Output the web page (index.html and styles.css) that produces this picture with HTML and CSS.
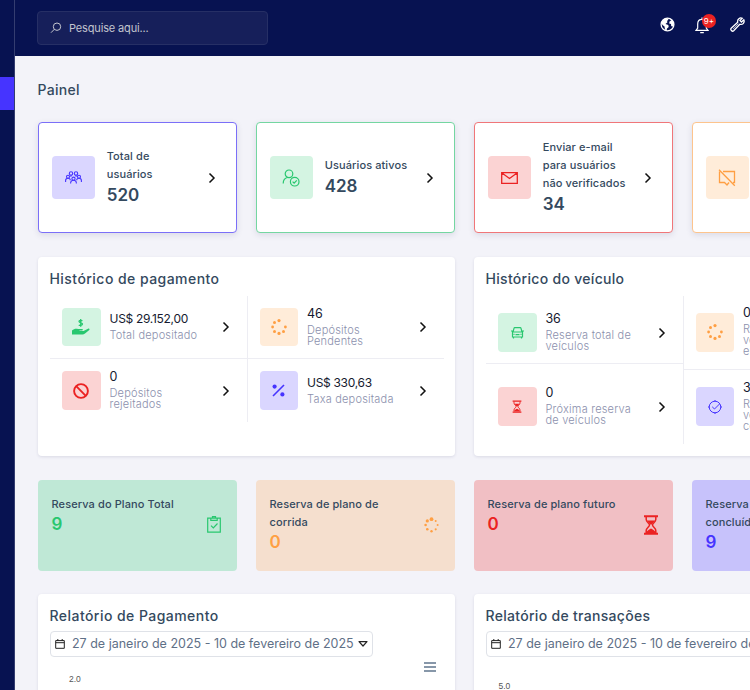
FILE: index.html
```
<!DOCTYPE html>
<html lang="pt">

<head>
    <meta charset="UTF-8">
    <meta name="viewport" content="width=device-width, initial-scale=1.0">
    <title>Painel</title>
    <link rel="stylesheet" href="styles.css">
</head>

<body>
    <!-- Shared icons -->
    <svg class="sprite">
        <symbol id="chevron" viewBox="0 0 8 12">
            <path d="M1.5 1.5L6 6L1.5 10.5" fill="none" stroke="currentColor" stroke-width="1.5" />
        </symbol>
        <symbol id="spinner" viewBox="0 0 16 16">
            <g fill="currentColor">
                <circle cx="8" cy="1.6" r="1.6" />
                <circle cx="3.5" cy="3.5" r="1.5" />
                <circle cx="1.6" cy="8" r="1.4" />
                <circle cx="3.5" cy="12.5" r="1.5" />
                <circle cx="8" cy="14.4" r="1.6" />
                <circle cx="12.5" cy="12.5" r="1.5" />
                <circle cx="14.4" cy="8" r="1.4" />
            </g>
        </symbol>
        <symbol id="hourglass" viewBox="0 0 16 20">
            <path d="M1 1.2h14M1 18.8h14" stroke="currentColor" stroke-width="2" />
            <path d="M3.2 2v2.5c0 2.5 3.3 3.8 3.3 5.5s-3.3 3-3.3 5.5V18M12.8 2v2.5c0 2.5-3.3 3.8-3.3 5.5s3.3 3 3.3 5.5V18" fill="none" stroke="currentColor" stroke-width="1.5" />
            <path d="M4 5.5h8L8.8 9.5H7.2zM3.5 18c0-2.5 2-3 4.5-4.5 2.5 1.5 4.5 2 4.5 4.5z" fill="currentColor" />
        </symbol>
        <symbol id="calendar" viewBox="0 0 10 10">
            <path d="M.7 1.6h8.6v7.7H.7zM.7 3.7h8.6M2.8 0v2M7.2 0v2" fill="none" stroke="currentColor" />
        </symbol>
        <symbol id="caret" viewBox="0 0 10 6">
            <path d="M1 .7h8L5 5z" fill="none" stroke="currentColor" stroke-width="1.2" stroke-linejoin="round" />
        </symbol>
    </svg>

    <aside class="sidebar">
        <div class="sidebar-active"></div>
    </aside>

    <main class="main">
        <header class="topbar">
            <div class="search">
                <svg width="12" height="12" viewBox="0 0 12 12" fill="none" stroke="currentColor">
                    <circle cx="7" cy="4.7" r="3.7" />
                    <path d="M4.3 7.3L1 10.7" />
                </svg>
                <span>Pesquise aqui...</span>
            </div>
            <nav class="top-icons">
                <svg width="15" height="15" viewBox="0 0 15 15">
                    <circle cx="7.5" cy="7.5" r="6.4" fill="none" stroke="#fff" stroke-width="1.3" />
                    <path d="M1.2 5.5L4 2l3-1 1.5 1.5L7 4l.5 1.3L5.5 7l2.8 1 .4 2-1.7 1.6L6.5 14 5 12.5 4.5 9.5 2.5 8zM10 2l3 2.3.8 3.2-1.3 2.3-1.3-.8-.2-2-1.800-.5.3-2 1.500-.7z" fill="#fff" />
                </svg>
                <div class="bell">
                    <svg width="14" height="17" viewBox="0 0 14 17" fill="none" stroke="#fff" stroke-width="1.2">
                        <path d="M1 13.3h12L11.3 11V7c0-2.8-1.7-4.6-4.3-4.6S2.7 4.2 2.7 7v4zM7 .5v2M5.2 15.6h3.6" />
                    </svg>
                    <span class="badge">9+</span>
                </div>
                <svg width="15" height="15" viewBox="0 0 15 15" fill="none" stroke="#fff" stroke-width="1.3">
                    <path d="M12.3 1.3C10 .2 7 2 7.7 5.3L1.2 11.3c-1.300 1.500 1 3.700 2.500 2.500L9.800 7.300c3 .7 5.200-1.800 4-4.500L11.500 5 10 3.600z" />
                    <path d="M3 12.1L8.3 6.7" stroke-width=".7" />
                </svg>
            </nav>
        </header>

        <div class="content">
            <h1 class="page-title">Painel</h1>

            <section class="grid-four">
                <div class="stat purple">
                    <div class="stat-icon">
                        <svg width="17" height="13" viewBox="0 0 17 13" fill="none" stroke="currentColor" stroke-width="1.1">
                            <circle cx="6" cy="2.5" r="1.7" />
                            <circle cx="11" cy="2.5" r="1.7" />
                            <circle cx="3" cy="5.7" r="1.5" />
                            <circle cx="14" cy="5.7" r="1.5" />
                            <circle cx="8.5" cy="7.7" r="1.6" />
                            <path d="M.6 11V9.5C.6 8 1.500 7.300 3 7.300s2.300.7 2.300 2M16.400 11V9.500c0-1.500-.9-2.200-2.400-2.200s-2.300.7-2.300 2M5.600 12.500c0-2 1-3.200 2.900-3.200s2.900 1.200 2.900 3.200M4.500 5.300L7 4.700M12.500 5.300L10 4.700" />
                        </svg>
                    </div>
                    <div class="stat-text">
                        <p>Total de<br>usuários</p>
                        <h3>520</h3>
                    </div>
                    <svg class="chevron"><use href="#chevron" /></svg>
                </div>
                <div class="stat green">
                    <div class="stat-icon">
                        <svg width="18" height="18" viewBox="0 0 18 18" fill="none" stroke="currentColor" stroke-width="1.2">
                            <circle cx="7" cy="4.8" r="3.8" />
                            <path d="M1.2 14.5c0-3.7 1.5-5.5 4.5-6" />
                            <circle cx="12.7" cy="12.7" r="4.3" />
                            <path d="M10.6 12.7l1.5 1.5 2.7-2.9" />
                        </svg>
                    </div>
                    <div class="stat-text">
                        <p>Usuários ativos</p>
                        <h3>428</h3>
                    </div>
                    <svg class="chevron"><use href="#chevron" /></svg>
                </div>
                <div class="stat red">
                    <div class="stat-icon">
                        <svg width="17" height="12" viewBox="0 0 17 12" fill="none" stroke="currentColor" stroke-width="1.3">
                            <path d="M.7.7h15.6v10.6H.7zM1 1l7.5 5.5L16 1" />
                        </svg>
                    </div>
                    <div class="stat-text">
                        <p>Enviar e-mail<br>para usuários<br>não verificados</p>
                        <h3>34</h3>
                    </div>
                    <svg class="chevron"><use href="#chevron" /></svg>
                </div>
                <div class="stat orange">
                    <div class="stat-icon">
                        <svg width="18" height="18" viewBox="0 0 18 18" fill="none" stroke="currentColor" stroke-width="1.3">
                            <path d="M1.5 2.5v11h5l2.5 2.5 2-2.5M5 2.5h11.5v11H15M1 .8l15.8 16" />
                        </svg>
                    </div>
                </div>
            </section>

            <section class="grid-two">
                <div class="panel history">
                    <h2>Histórico de pagamento</h2>
                    <div class="cells">
                        <div class="cell green">
                            <div class="cell-icon">
                                <svg width="18" height="17" viewBox="0 0 18 17">
                                    <path d="M0 11.5c2-1.8 4-2 6-1.5h4c1.2 0 1.2 1.5 0 1.5H7.5v.6h4L16 9.7c1.2-.5 2.2.5 1 1.5l-4 3.3c-.8.7-1.5 1-2.5 1H0z" fill="currentColor" />
                                    <path d="M10.4 1.9C9.6 1.2 7 1 7 2.6s3.5.9 3.5 2.5S7.7 6.7 6.8 5.9M8.7 0v7.8" fill="none" stroke="currentColor" stroke-width="1.3" />
                                </svg>
                            </div>
                            <div class="cell-text">
                                <p class="value amount">US$ 29.152,00</p>
                                <p class="label">Total depositado</p>
                            </div>
                            <svg class="chevron"><use href="#chevron" /></svg>
                        </div>
                        <div class="cell orange">
                            <div class="cell-icon"><svg width="16" height="16"><use href="#spinner" /></svg></div>
                            <div class="cell-text">
                                <p class="value">46</p>
                                <p class="label">Depósitos<br>Pendentes</p>
                            </div>
                            <svg class="chevron"><use href="#chevron" /></svg>
                        </div>
                        <div class="cell red">
                            <div class="cell-icon">
                                <svg width="16" height="16" viewBox="0 0 16 16" fill="none" stroke="currentColor" stroke-width="1.9">
                                    <circle cx="8" cy="8" r="6.9" />
                                    <path d="M3.2 3.2l9.6 9.6" />
                                </svg>
                            </div>
                            <div class="cell-text">
                                <p class="value">0</p>
                                <p class="label">Depósitos<br>rejeitados</p>
                            </div>
                            <svg class="chevron"><use href="#chevron" /></svg>
                        </div>
                        <div class="cell purple">
                            <div class="cell-icon">
                                <svg width="13" height="13" viewBox="0 0 13 13">
                                    <path d="M1 12L12 1" stroke="currentColor" stroke-width="1.6" />
                                    <circle cx="2.6" cy="2.6" r="2.1" fill="currentColor" />
                                    <circle cx="10.4" cy="10.4" r="2.1" fill="currentColor" />
                                </svg>
                            </div>
                            <div class="cell-text">
                                <p class="value amount">US$ 330,63</p>
                                <p class="label">Taxa depositada</p>
                            </div>
                            <svg class="chevron"><use href="#chevron" /></svg>
                        </div>
                    </div>
                </div>

                <div class="panel history">
                    <h2 class="tight">Histórico do veículo</h2>
                    <div class="cells vehicle">
                        <div class="cell green">
                            <div class="cell-icon">
                                <svg width="13" height="12" viewBox="0 0 13 12" fill="none" stroke="currentColor" stroke-width="1.2">
                                    <path d="M2 5l1-3.7c.1-.4.3-.6.7-.6h5.6c.4 0 .6.2.7.6L11 5M0 4h2M11 4h2M1.5 5h10v5h-10zM2.5 10v1.5M10.5 10v1.5M4.5 7.7h4M2.5 7.3h1M9.5 7.3h1" />
                                </svg>
                            </div>
                            <div class="cell-text">
                                <p class="value">36</p>
                                <p class="label">Reserva total de<br>veículos</p>
                            </div>
                            <svg class="chevron"><use href="#chevron" /></svg>
                        </div>
                        <div class="cell orange">
                            <div class="cell-icon"><svg width="16" height="16"><use href="#spinner" /></svg></div>
                            <div class="cell-text">
                                <p class="value">0</p>
                                <p class="label">Reserva de<br>veículos<br>em corrida</p>
                            </div>
                        </div>
                        <div class="cell red">
                            <div class="cell-icon"><svg width="10" height="13"><use href="#hourglass" /></svg></div>
                            <div class="cell-text">
                                <p class="value">0</p>
                                <p class="label">Próxima reserva<br>de veículos</p>
                            </div>
                            <svg class="chevron"><use href="#chevron" /></svg>
                        </div>
                        <div class="cell purple">
                            <div class="cell-icon">
                                <svg width="14" height="14" viewBox="0 0 14 14" fill="none" stroke="currentColor">
                                    <circle cx="7" cy="7" r="5.8" />
                                    <path d="M4.2 6.8L6.5 9l5-5M7 0v1.5M7 12.5V14M0 7h1.5M12.5 7H14" />
                                </svg>
                            </div>
                            <div class="cell-text">
                                <p class="value">36</p>
                                <p class="label">Reserva de<br>veículos<br>concluída</p>
                            </div>
                        </div>
                    </div>
                </div>
            </section>

            <section class="grid-four plans">
                <div class="plan green">
                    <div>
                        <p>Reserva do Plano Total</p>
                        <h3>9</h3>
                    </div>
                    <div class="plan-icon">
                        <svg width="14" height="17" viewBox="0 0 14 17" fill="none" stroke="currentColor" stroke-width="1.2">
                            <path d="M.7 2.2h12.6v14H.7zM3.8 2v2.3h6.4V2H8.5V.7h-3V2zM4 9.600l2.300 2.300L10.500 7.500" />
                        </svg>
                    </div>
                </div>
                <div class="plan orange">
                    <div>
                        <p>Reserva de plano de<br>corrida</p>
                        <h3>0</h3>
                    </div>
                    <div class="plan-icon">
                        <svg width="15" height="16" viewBox="0 0 15 16" fill="currentColor">
                            <circle cx="7.5" cy="2.2" r="1.9" />
                            <circle cx="3.3" cy="3.9" r="1.6" />
                            <circle cx="1.6" cy="8" r="1.3" />
                            <circle cx="3.3" cy="12.3" r="1.3" />
                            <circle cx="7.5" cy="14.2" r="1.2" />
                            <circle cx="11.7" cy="12.3" r="1.1" />
                            <circle cx="13.6" cy="8" r="1" />
                            <circle cx="11.7" cy="3.9" r="1" />
                        </svg>
                    </div>
                </div>
                <div class="plan red">
                    <div>
                        <p>Reserva de plano futuro</p>
                        <h3>0</h3>
                    </div>
                    <div class="plan-icon">
                        <svg width="16" height="20"><use href="#hourglass" /></svg>
                    </div>
                </div>
                <div class="plan purple">
                    <div>
                        <p>Reserva do plano<br>concluída</p>
                        <h3>9</h3>
                    </div>
                </div>
            </section>

            <section class="grid-two reports">
                <div class="panel">
                    <h2>Relatório de Pagamento</h2>
                    <div class="date-range">
                        <svg width="10" height="10"><use href="#calendar" /></svg>
                        <span>27 de janeiro de 2025 - 10 de fevereiro de 2025</span>
                        <svg width="10" height="6"><use href="#caret" /></svg>
                    </div>
                    <div class="chart">
                        <span class="tick">2.0</span>
                        <div class="menu"><i></i><i></i><i></i></div>
                    </div>
                </div>
                <div class="panel">
                    <h2 class="tight">Relatório de transações</h2>
                    <div class="date-range">
                        <svg width="10" height="10"><use href="#calendar" /></svg>
                        <span>27 de janeiro de 2025 - 10 de fevereiro de 2025</span>
                        <svg width="10" height="6"><use href="#caret" /></svg>
                    </div>
                    <div class="chart second">
                        <span class="tick">5.0</span>
                    </div>
                </div>
            </section>
        </div>
    </main>
</body>

</html>
```
FILE: styles.css
```
* {
    box-sizing: border-box;
}

body {
    margin: 0;
    height: 690px;
    display: flex;
    overflow: hidden;
    font-family: Inter, "Open Sans", sans-serif;
    background-color: #f3f3f9;
    color: #34495e;
}

h1,
h2,
h3,
p {
    margin: 0;
}

svg {
    display: block;
    flex-shrink: 0;
}

.sprite {
    display: none;
}

.purple {
    --main: #4634ff;
    --border: #7b6ff8;
    --soft: #dad6ff;
    --fill: #c7c2fb;
}

.green {
    --main: #28c76f;
    --border: #74d6a1;
    --soft: #d4f4e2;
    --fill: #bfe8d6;
}

.red {
    --main: #eb2222;
    --border: #f07679;
    --soft: #fbd3d3;
    --fill: #f1bfc4;
}

.orange {
    --main: #ff9f43;
    --border: #fdc48d;
    --soft: #ffecd9;
    --fill: #f5dfce;
}

.sidebar {
    width: 15px;
    flex-shrink: 0;
    padding-top: 77px;
    background-color: #071251;
    border-right: 1px solid #343d70;
}

.sidebar-active {
    height: 33px;
    background-color: #4634ff;
}

.main {
    flex: 1;
    min-width: 0;
    overflow: hidden;
}

.topbar {
    height: 56px;
    padding: 11px 0 0 22px;
    display: flex;
    align-items: flex-start;
    background-color: #071251;
}

.search {
    width: 231px;
    height: 34px;
    padding-left: 12px;
    flex-shrink: 0;
    display: flex;
    align-items: center;
    gap: 7px;
    border: 1px solid #262f65;
    border-radius: 4px;
    background-color: #161f5a;
    color: #c3c5cf;
    font-size: 11px;
    letter-spacing: -0.15px;
}

.top-icons {
    margin: 6px 0 0 391.5px;
    display: flex;
    gap: 20.5px;
}

.bell {
    position: relative;
}

.badge {
    position: absolute;
    top: -3px;
    left: 7px;
    width: 14px;
    height: 14px;
    border-radius: 50%;
    background-color: #eb2222;
    color: #fff;
    font-size: 8px;
    line-height: 14px;
    text-align: center;
}

.content {
    width: 877px;
    padding: 23px 0 0 22.5px;
}

.page-title {
    font-size: 14px;
    line-height: 21px;
    font-weight: 500;
    letter-spacing: 0.3px;
}

.grid-four {
    display: grid;
    grid-template-columns: repeat(4, 199.5px);
    gap: 18.5px;
    margin-top: 22px;
}

.grid-two {
    display: grid;
    grid-template-columns: repeat(2, 417.5px);
    gap: 18.5px;
    margin-top: 24px;
}

.stat {
    height: 111px;
    padding: 0 20px 0 13.7px;
    display: flex;
    align-items: center;
    border: 1px solid var(--border);
    border-radius: 4px;
    background-color: #fff;
    box-shadow: 0 2px 6px rgba(40, 40, 90, 0.12);
}

.stat-icon,
.cell-icon {
    flex-shrink: 0;
    display: flex;
    align-items: center;
    justify-content: center;
    border-radius: 4px;
    background-color: var(--soft);
    color: var(--main);
}

.stat-icon {
    width: 42.5px;
    height: 42.5px;
    margin-right: 12px;
}

.stat-text {
    flex: 1;
    margin-top: -2px;
    white-space: nowrap;
}

.stat p,
.plan p {
    font-size: 11px;
    line-height: 18px;
    font-weight: 500;
    letter-spacing: 0.1px;
    white-space: nowrap;
}

.stat h3 {
    font-size: 17px;
    line-height: 24px;
    font-weight: 600;
}

.chevron {
    width: 8px;
    height: 12px;
    color: #111;
}

.panel {
    height: 199px;
    padding: 11px 12px;
    border-radius: 4px;
    background-color: #fff;
    box-shadow: 0 1px 3px rgba(40, 40, 90, 0.12);
}

.panel h2 {
    font-size: 14px;
    line-height: 22px;
    font-weight: 500;
    letter-spacing: 0.45px;
    white-space: nowrap;
}

.panel .tight {
    letter-spacing: 0.3px;
}

.cells {
    margin-top: 6px;
    display: grid;
    grid-template-columns: 197px 197px;
    grid-template-rows: 63px 63px;
}

.cell {
    padding: 0 17px 0 12.5px;
    display: flex;
    align-items: center;
}

.cell:nth-child(-n+2) {
    border-bottom: 1px solid #ededf3;
}

.cell:nth-child(even) {
    padding-left: 12px;
    border-left: 1px solid #ededf3;
}

.cell-icon {
    width: 38.5px;
    height: 38.5px;
    margin-right: 9px;
}

.cell-text {
    flex: 1;
}

.value {
    margin-bottom: 5px;
    font-size: 12.5px;
    line-height: 12px;
    letter-spacing: -0.1px;
    color: #151a30;
    white-space: nowrap;
}

.amount {
    font-size: 12px;
    letter-spacing: -0.3px;
}

.label {
    font-size: 11px;
    line-height: 11px;
    font-weight: 300;
    letter-spacing: 0.2px;
    color: #8b90ad;
    white-space: nowrap;
}

.vehicle {
    grid-template-rows: 73.5px 74px;
}

/* the first vehicle cell closes a little above its neighbour */
.vehicle .cell:first-child {
    height: 68px;
    padding-top: 6px;
}

.plans {
    margin-top: 24px;
}

.plan {
    height: 90.5px;
    padding: 15px 14px 0;
    display: flex;
    justify-content: space-between;
    border-radius: 4px;
    background-color: var(--fill);
}

.plan h3 {
    font-size: 17px;
    line-height: 22px;
    font-weight: 600;
    color: var(--main);
}

.plan-icon {
    height: 59px;
    display: flex;
    align-items: center;
    color: var(--main);
}

.plan.green,
.plan.orange {
    padding-right: 16px;
}

.reports {
    margin-top: 23px;
}

.reports .panel {
    height: 260px;
}

.date-range {
    width: 323px;
    height: 26px;
    margin-top: 4px;
    padding: 0 4px;
    display: flex;
    align-items: center;
    border: 1px solid #dfe2e8;
    border-radius: 4px;
    font-size: 12.5px;
    color: #5f7087;
    white-space: nowrap;
}

.date-range svg {
    color: #222;
}

.date-range span {
    width: 282px;
    margin: 0 4px 0 7.5px;
}

.chart {
    display: flex;
    justify-content: space-between;
    padding: 5px 7px 0 19.5px;
}

.tick {
    margin-top: 12px;
    font-family: "Liberation Sans", Arial, sans-serif;
    font-size: 8.5px;
    line-height: 10px;
    color: #555;
}

.second {
    padding: 12.5px 0 0 13px;
}

.menu {
    width: 12px;
    display: flex;
    flex-direction: column;
    gap: 2px;
}

.menu i {
    height: 2px;
    background-color: #8797a9;
}
```
